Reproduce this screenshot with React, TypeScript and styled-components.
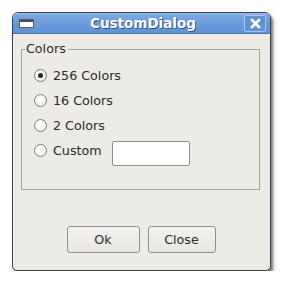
import React from "react";
import styled, { createGlobalStyle } from "styled-components";

const GlobalStyle = createGlobalStyle`
  html, body {
    margin: 0;
    padding: 0;
    background: #ffffff;
  }
  body {
    font-family: "DejaVu Sans", "Liberation Sans", sans-serif;
  }
`;

const Page = styled.div`
  padding: 12px 0 0 12px;
`;

const Window = styled.div`
  width: 259px;
  height: 259px;
  box-sizing: border-box;
  border: 1px solid #3a4250;
  border-radius: 6px 6px 5px 5px;
  background: #edebe6;
  display: flex;
  flex-direction: column;
  overflow: hidden;
  box-shadow: 2px 3px 2px rgba(60, 60, 60, 0.55), 3px 4px 5px rgba(0, 0, 0, 0.2);
`;

const TitleBar = styled.div`
  height: 21px;
  flex: none;
  display: flex;
  align-items: center;
  padding: 0 4px 0 6px;
  background: linear-gradient(#a3c3ee 0, #7aa7e1 2px, #6b9cdb 50%, #5e92d5 100%);
  border-bottom: 1px solid #4a78b8;
  box-sizing: border-box;
`;

const TitleText = styled.div`
  flex: 1;
  text-align: center;
  color: #ffffff;
  font-weight: bold;
  font-size: 13.5px;
  text-shadow: 1px 1px 0 #2f5590;
  padding-left: 8px;
`;

const CloseButton = styled.div`
  width: 22px;
  height: 17px;
  box-sizing: border-box;
  border: 1px solid #a9c6ee;
  border-radius: 2px;
  background: #5f92d4;
  display: flex;
  align-items: center;
  justify-content: center;
  margin-top: 1px;
`;

const Body = styled.div`
  flex: 1;
  display: flex;
  flex-direction: column;
  padding: 15px 10px 16px 8px;
`;

const Group = styled.div`
  height: 141px;
  box-sizing: border-box;
  border: 1px solid #a4a29c;
  display: flex;
  flex-direction: column;
`;

const GroupLabel = styled.div`
  align-self: flex-start;
  margin: -9px 0 0 3px;
  padding: 0 2px 0 1px;
  background: #edebe6;
  font-size: 12.7px;
  line-height: 16px;
  color: #2a2a2a;
`;

const Options = styled.div`
  display: flex;
  flex-direction: column;
  margin-top: 6px;
  padding-left: 12px;
`;

const Row = styled.label`
  height: 25px;
  display: flex;
  align-items: center;
  font-size: 12.7px;
  color: #2a2a2a;
`;

const Radio = styled.span<{ $checked?: boolean }>`
  width: 13px;
  height: 13px;
  box-sizing: border-box;
  border-radius: 50%;
  border: 1px solid #7c7b77;
  background: radial-gradient(circle at 40% 35%, #ffffff 0, #f4f3f0 60%, #dcdad4 100%);
  display: flex;
  align-items: center;
  justify-content: center;
  margin-right: 6px;

  &::after {
    content: "";
    display: ${({ $checked }) => ($checked ? "block" : "none")};
    width: 5px;
    height: 5px;
    border-radius: 50%;
    background: #2a2a2a;
  }
`;

const TextInput = styled.input`
  width: 78px;
  height: 25px;
  box-sizing: border-box;
  margin: 6px 0 0 10px;
  border: 1px solid #8e8d89;
  border-radius: 2px;
  background: #ffffff;
  outline: none;
`;

const Spacer = styled.div`
  flex: 1;
`;

const Buttons = styled.div`
  display: flex;
  justify-content: center;
  gap: 8px;
  padding-left: 1px;
  margin-bottom: 1px;
`;

const Button = styled.button<{ $width: number }>`
  width: ${({ $width }) => $width}px;
  height: 27px;
  box-sizing: border-box;
  border: 1px solid #8f8e8a;
  border-radius: 3px;
  background: linear-gradient(#f3f2ef, #e8e6e1);
  font-family: "DejaVu Sans", "Liberation Sans", sans-serif;
  font-size: 12.7px;
  color: #2a2a2a;
  padding: 0;
`;

const options = ["256 Colors", "16 Colors", "2 Colors"];

export default function App() {
  return (
    <>
      <GlobalStyle />
      <Page>
        <Window>
          <TitleBar>
            <svg width="15" height="9" viewBox="0 0 15 9">
              <rect x="0.5" y="0.5" width="14" height="8" fill="#ffffff" stroke="#5a5a5a" />
              <rect x="1" y="1" width="13" height="2" fill="#4d4d4d" />
            </svg>
            <TitleText>CustomDialog</TitleText>
            <CloseButton>
              <svg width="11" height="11" viewBox="0 0 11 11">
                <path
                  d="M2 2 L9 9 M9 2 L2 9"
                  stroke="#ffffff"
                  strokeWidth="2.6"
                  strokeLinecap="square"
                />
              </svg>
            </CloseButton>
          </TitleBar>
          <Body>
            <Group>
              <GroupLabel>Colors</GroupLabel>
              <Options>
                {options.map((o, i) => (
                  <Row key={o}>
                    <Radio $checked={i === 0} />
                    {o}
                  </Row>
                ))}
                <Row>
                  <Radio />
                  Custom
                  <TextInput />
                </Row>
              </Options>
            </Group>
            <Spacer />
            <Buttons>
              <Button $width={73}>Ok</Button>
              <Button $width={68}>Close</Button>
            </Buttons>
          </Body>
        </Window>
      </Page>
    </>
  );
}
